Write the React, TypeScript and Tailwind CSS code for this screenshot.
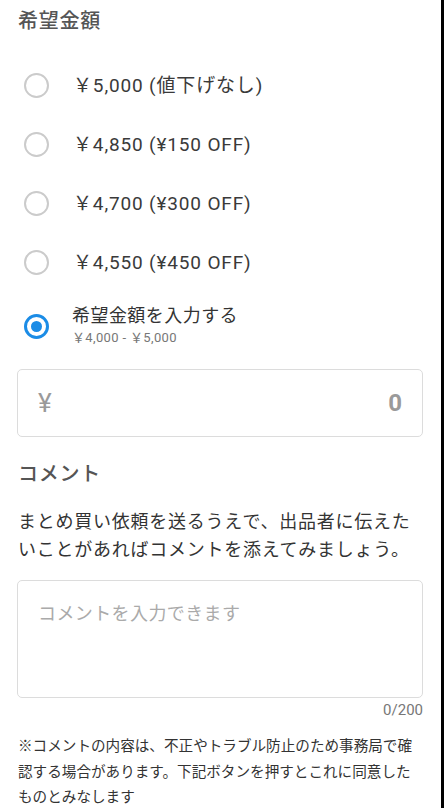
import React from 'react';

// 希望金額の選択肢
const priceOptions = [
  '￥5,000 (値下げなし)',
  '￥4,850 (¥150 OFF)',
  '￥4,700 (¥300 OFF)',
  '￥4,550 (¥450 OFF)',
];

const font = "font-['Roboto','Noto_Sans_CJK_JP',sans-serif]";

function Radio({ checked }: { checked?: boolean }) {
  if (checked) {
    return (
      <div className="w-[25px] h-[25px] rounded-full border-[3px] border-[#1b8ce6] flex items-center justify-center shrink-0">
        <div className="w-[11px] h-[11px] rounded-full bg-[#1b8ce6]" />
      </div>
    );
  }
  return <div className="w-[25px] h-[25px] rounded-full border-2 border-[#cbcbcb] shrink-0" />;
}

export default function App() {
  return (
    <div className={`w-[444px] h-[808px] overflow-hidden bg-black flex ${font}`}>
      <div className="w-[441px] bg-white px-[18px] text-[#333]">
        <h2 className="pt-[7px] text-[20px] leading-[28px] tracking-[0.75px] text-[#555] font-medium">希望金額</h2>

        {/* 選択肢 */}
        <div className="mt-[21px]">
          {priceOptions.map((label, i) => (
            <div key={i} className="h-[59px] flex items-center">
              <div className="ml-[6px]">
                <Radio />
              </div>
              <span className="ml-[24px] text-[19px] leading-[24px] tracking-[0.85px] text-[#3a3a3a]">{label}</span>
            </div>
          ))}
          <div className="pt-[12px] flex items-center">
            <div className="ml-[6px]">
              <Radio checked />
            </div>
            <div className="ml-[23px]">
              <div className="text-[18px] leading-[24px] tracking-[0.45px] text-[#333]">希望金額を入力する</div>
              <div className="text-[13px] leading-[20px] tracking-[0.35px] text-[#777]">￥4,000 - ￥5,000</div>
            </div>
          </div>
        </div>

        {/* 金額入力 */}
        <div className="mt-[21px] -ml-px w-[406px] h-[68px] border border-[#dcdcdc] rounded-[5px] flex items-center justify-between pl-[20px] pr-[20px]">
          <span className="text-[26px] leading-[30px] text-[#9a9a9a]">¥</span>
          <span className="text-[24px] font-bold text-[#9a9a9a]">0</span>
        </div>

        <h2 className="mt-[23px] text-[20px] leading-[28px] tracking-[0.75px] text-[#555] font-medium">コメント</h2>
        <p className="mt-[20px] text-[18px] leading-[28px] tracking-[0.75px] text-[#333]">
          まとめ買い依頼を送るうえで、出品者に伝えたいことがあればコメントを添えてみましょう。
        </p>

        {/* コメント入力 */}
        <div className="mt-[16px] -ml-px w-[406px] h-[118px] border border-[#dcdcdc] rounded-[5px] pt-[19px] pl-[20px]">
          <span className="text-[18px] leading-[27px] tracking-[0.4px] text-[#aaa]">コメントを入力できます</span>
        </div>
        <div className="mt-[2px] w-[405px] text-right text-[15px] leading-[20px] text-[#777]">0/200</div>

        <p className="mt-[14px] text-[14.6px] leading-[25.5px] text-[#333]">
          ※コメントの内容は、不正やトラブル防止のため事務局で確認する場合があります。下記ボタンを押すとこれに同意したものとみなします
        </p>
      </div>
    </div>
  );
}
